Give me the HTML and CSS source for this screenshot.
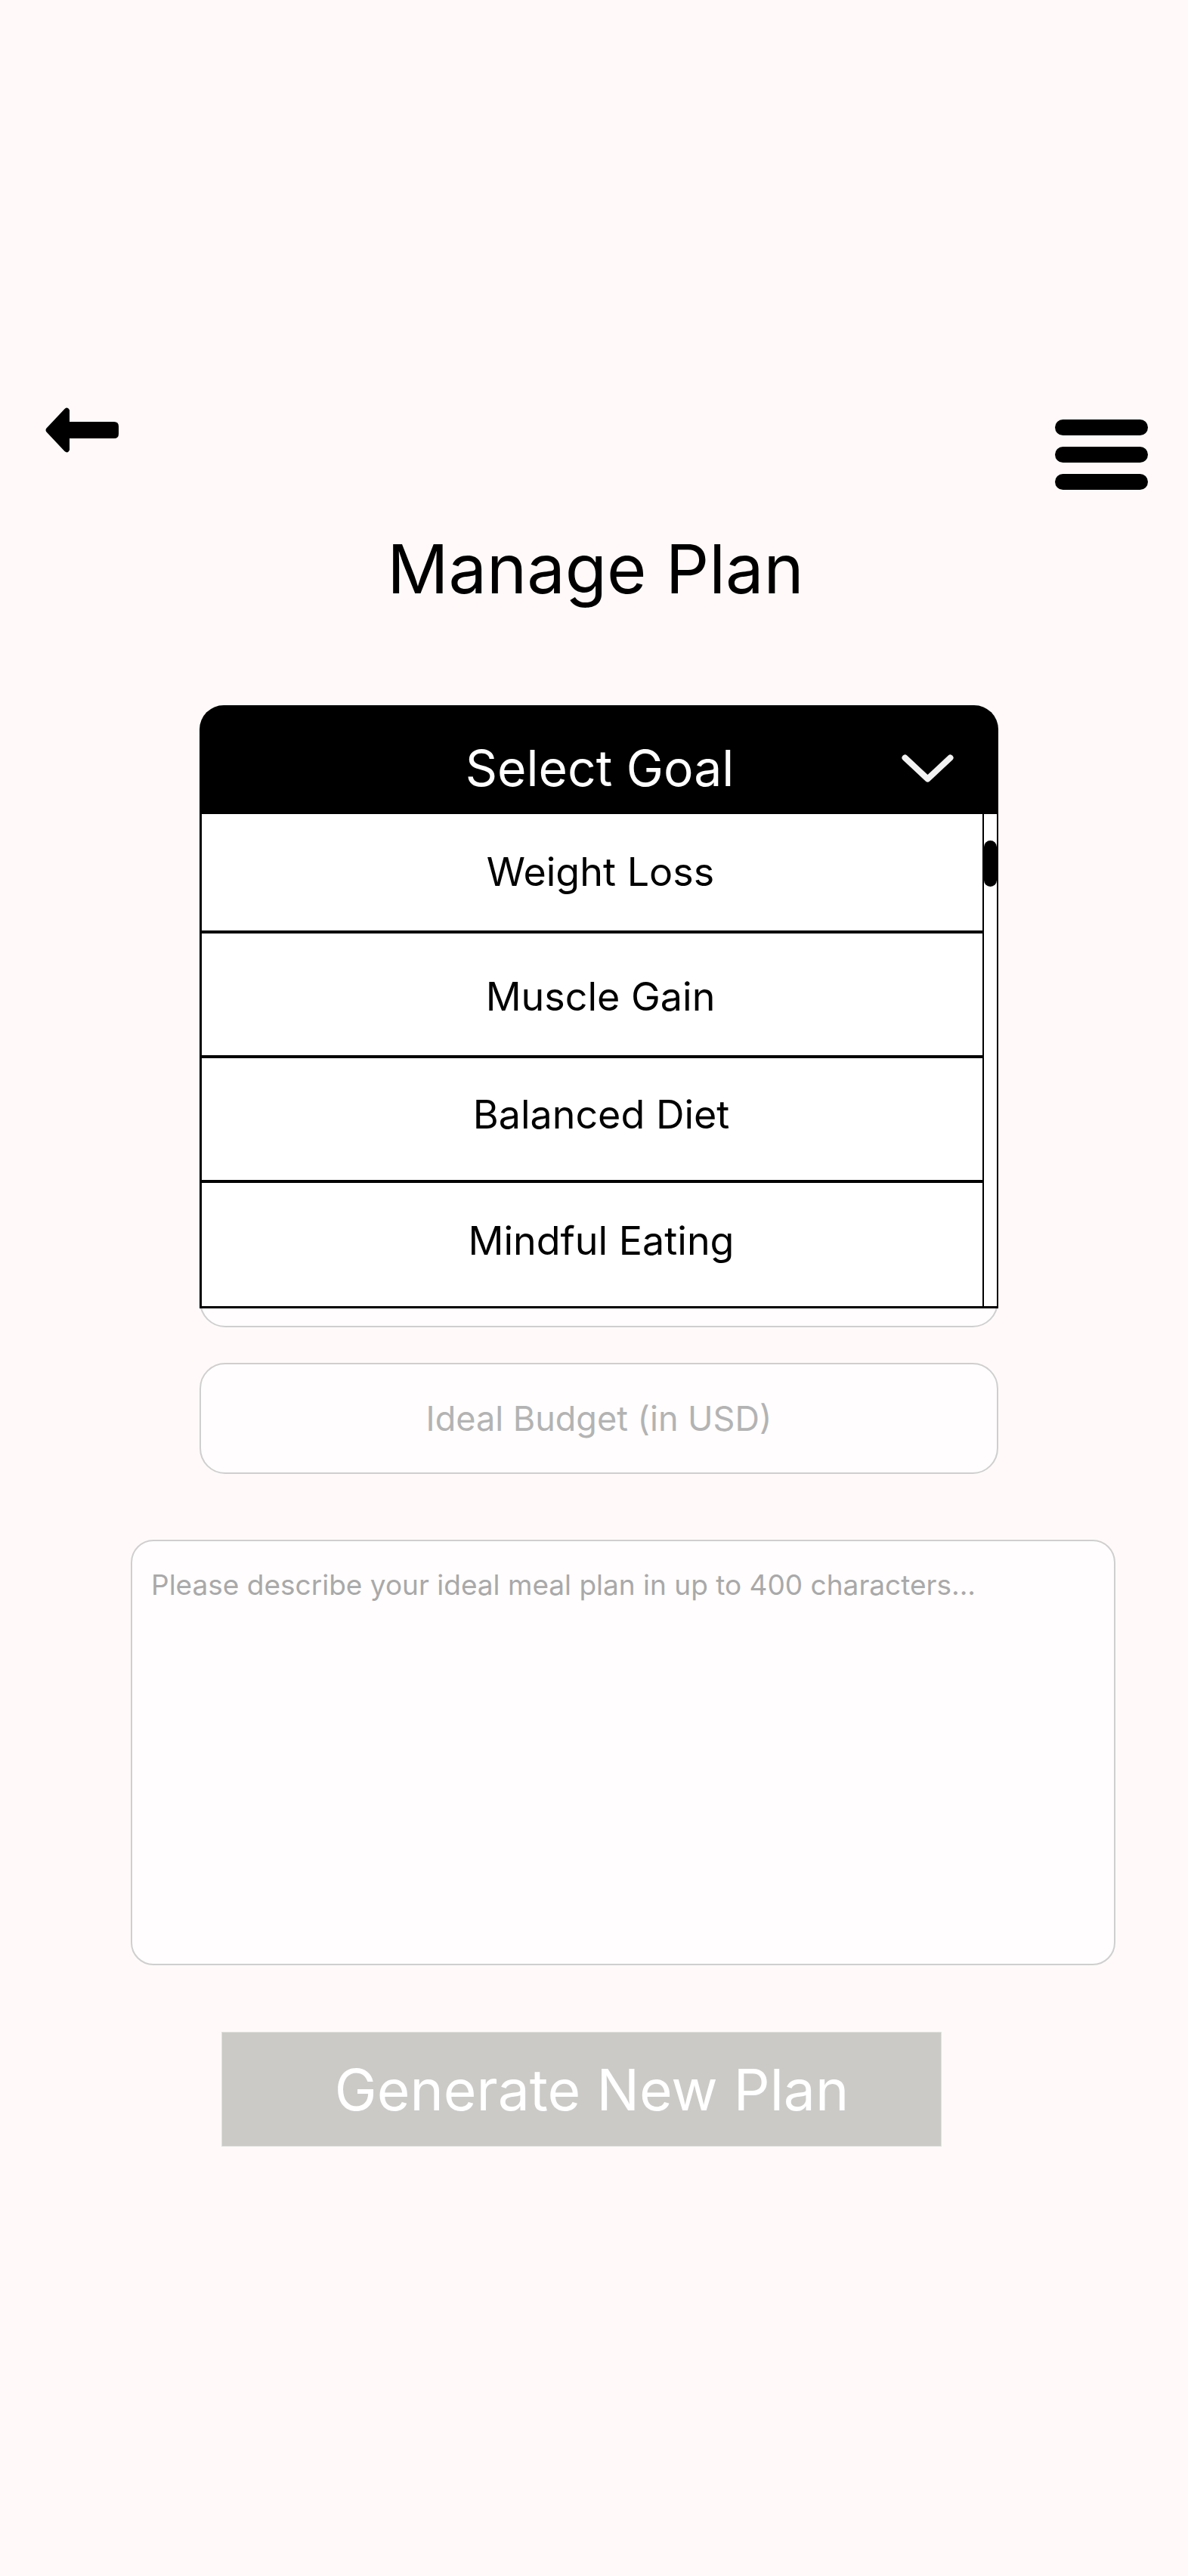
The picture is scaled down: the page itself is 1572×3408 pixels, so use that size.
FILE: index.html
```html
<!DOCTYPE html>
<html lang="en">
<head>
<meta charset="utf-8">
<title>Manage Plan</title>
<link rel="stylesheet" href="styles.css">
</head>
<body>
<div class="page">
  <header class="topbar">
    <button class="icon-btn back" aria-label="Back">
      <svg width="97" height="60" viewBox="0 0 97 60"><path d="M1.5 27.5 L25.5 2 Q29.5 -1.5 32 3.5 L32 19 L91 19 Q97 19 97 25 L97 35 Q97 41 91 41 L32 41 L32 56.5 Q29.5 61.5 25.5 58 L1.5 32.5 Q-0.5 30 1.5 27.5 Z" fill="#000"/></svg>
    </button>
    <button class="icon-btn menu" aria-label="Menu">
      <svg width="123" height="93" viewBox="0 0 123 93"><rect x="0" y="0" width="123" height="21" rx="10.5" fill="#000"/><rect x="0" y="36" width="123" height="21" rx="10.5" fill="#000"/><rect x="0" y="72" width="123" height="21" rx="10.5" fill="#000"/></svg>
    </button>
  </header>

  <h1 class="title">Manage Plan</h1>

  <div class="form">
    <div class="select">
      <div class="select-head">
        <span></span>
        <span class="select-label">Select Goal</span>
        <svg class="chevron" width="69" height="37" viewBox="0 0 69 37"><polyline points="4.5,4.5 34.5,32.5 64.5,4.5" fill="none" stroke="#f2f2f2" stroke-width="8" stroke-linecap="round" stroke-linejoin="round"/></svg>
      </div>
      <div class="options-box">
        <ul class="options">
          <li class="option">Weight Loss</li>
          <li class="option">Muscle Gain</li>
          <li class="option option-raised">Balanced Diet</li>
          <li class="option option-raised">Mindful Eating</li>
        </ul>
        <div class="scroll-track"><div class="scroll-thumb"></div></div>
      </div>
    </div>
    <div class="field hidden-field"></div>
    <input class="field budget" type="text" placeholder="Ideal Budget (in USD)">
  </div>

  <textarea class="description" placeholder="Please describe your ideal meal plan in up to 400 characters..."></textarea>

  <button class="generate">Generate New Plan</button>
</div>
</body>
</html>
```

FILE: styles.css
```css
* { box-sizing: border-box; }

html, body {
  margin: 0;
  padding: 0;
  background: #fffaf9;
}

body {
  font-family: "Inter", "Liberation Sans", sans-serif;
  color: #000;
}

.page {
  width: 1572px;
  min-height: 3408px;
  display: flex;
  flex-direction: column;
  align-items: flex-start;
}

.topbar {
  width: 100%;
  display: flex;
  justify-content: space-between;
  align-items: flex-start;
  padding: 539px 53px 0 60px;
}

.icon-btn {
  border: 0;
  background: none;
  padding: 0;
  margin: 0;
  display: block;
  line-height: 0;
}

.menu { margin-top: 16px; }

.title {
  align-self: stretch;
  margin: 50px 0 0 0;
  font-size: 90px;
  font-weight: 400;
  line-height: normal;
  text-align: center;
  padding-left: 4px;
}

.form {
  margin: 126px 0 0 264px;
  width: 1057px;
  display: flex;
  flex-direction: column;
}

.select {
  position: relative;
  z-index: 2;
}

.select-head {
  height: 144px;
  background: #000;
  border-radius: 32px 32px 0 0;
  display: grid;
  grid-template-columns: 1fr auto 1fr;
  align-items: center;
  padding-top: 22px;
}

.select-label {
  color: #fff;
  font-size: 66px;
  line-height: normal;
  padding-left: 2px;
}

.chevron {
  justify-self: end;
  margin-right: 59px;
}

.options-box {
  position: absolute;
  top: 144px;
  left: 0;
  width: 1057px;
  height: 654px;
  display: flex;
  background: #fff;
  border-left: 3px solid #000;
  border-bottom: 3px solid #000;
  overflow: hidden;
}

.options {
  list-style: none;
  margin: -7px 0 0 0;
  padding: 0;
  flex: 1;
}

.option {
  height: 165px;
  border-bottom: 4px solid #000;
  display: flex;
  align-items: center;
  justify-content: center;
  font-size: 52px;
  line-height: normal;
  padding: 6px 0 0 22px;
}

.option-raised {
  padding: 0 0 12px 24px;
}

.option:last-child { border-bottom: 0; }

.scroll-track {
  width: 21px;
  border-left: 2px solid #000;
  border-right: 2px solid #000;
  background: #fff;
  padding-top: 35px;
}

.scroll-thumb {
  width: 17px;
  height: 61px;
  background: #000;
  border-radius: 9px;
}

.field {
  width: 1057px;
  height: 147px;
  border: 2px solid #cfcfcf;
  border-radius: 34px;
  background: #fffdfd;
}

.hidden-field {
  margin-top: 532px;
}

.budget {
  margin-top: 47px;
  font-family: "Inter", "Liberation Sans", sans-serif;
  font-size: 45px;
  text-align: center;
  color: #000;
  outline: none;
}

.budget::placeholder { color: #b3b3b3; }

.description {
  margin: 87px 0 0 173px;
  width: 1303px;
  height: 563px;
  border: 2px solid #cfcfcf;
  border-radius: 30px;
  background: #fffdfd;
  padding: 35px 25px;
  font-family: "Inter", "Liberation Sans", sans-serif;
  font-size: 37px;
  line-height: normal;
  resize: none;
  outline: none;
}

.description::placeholder { color: #a9a9a9; }

.generate {
  margin: 88px 0 0 293px;
  width: 953px;
  height: 152px;
  background: #cbcac7;
  border: 1px solid #e2e2e0;
  color: #fff;
  font-family: "Inter", "Liberation Sans", sans-serif;
  font-size: 75px;
  font-weight: 400;
  padding: 0 0 0 27px;
}
```
